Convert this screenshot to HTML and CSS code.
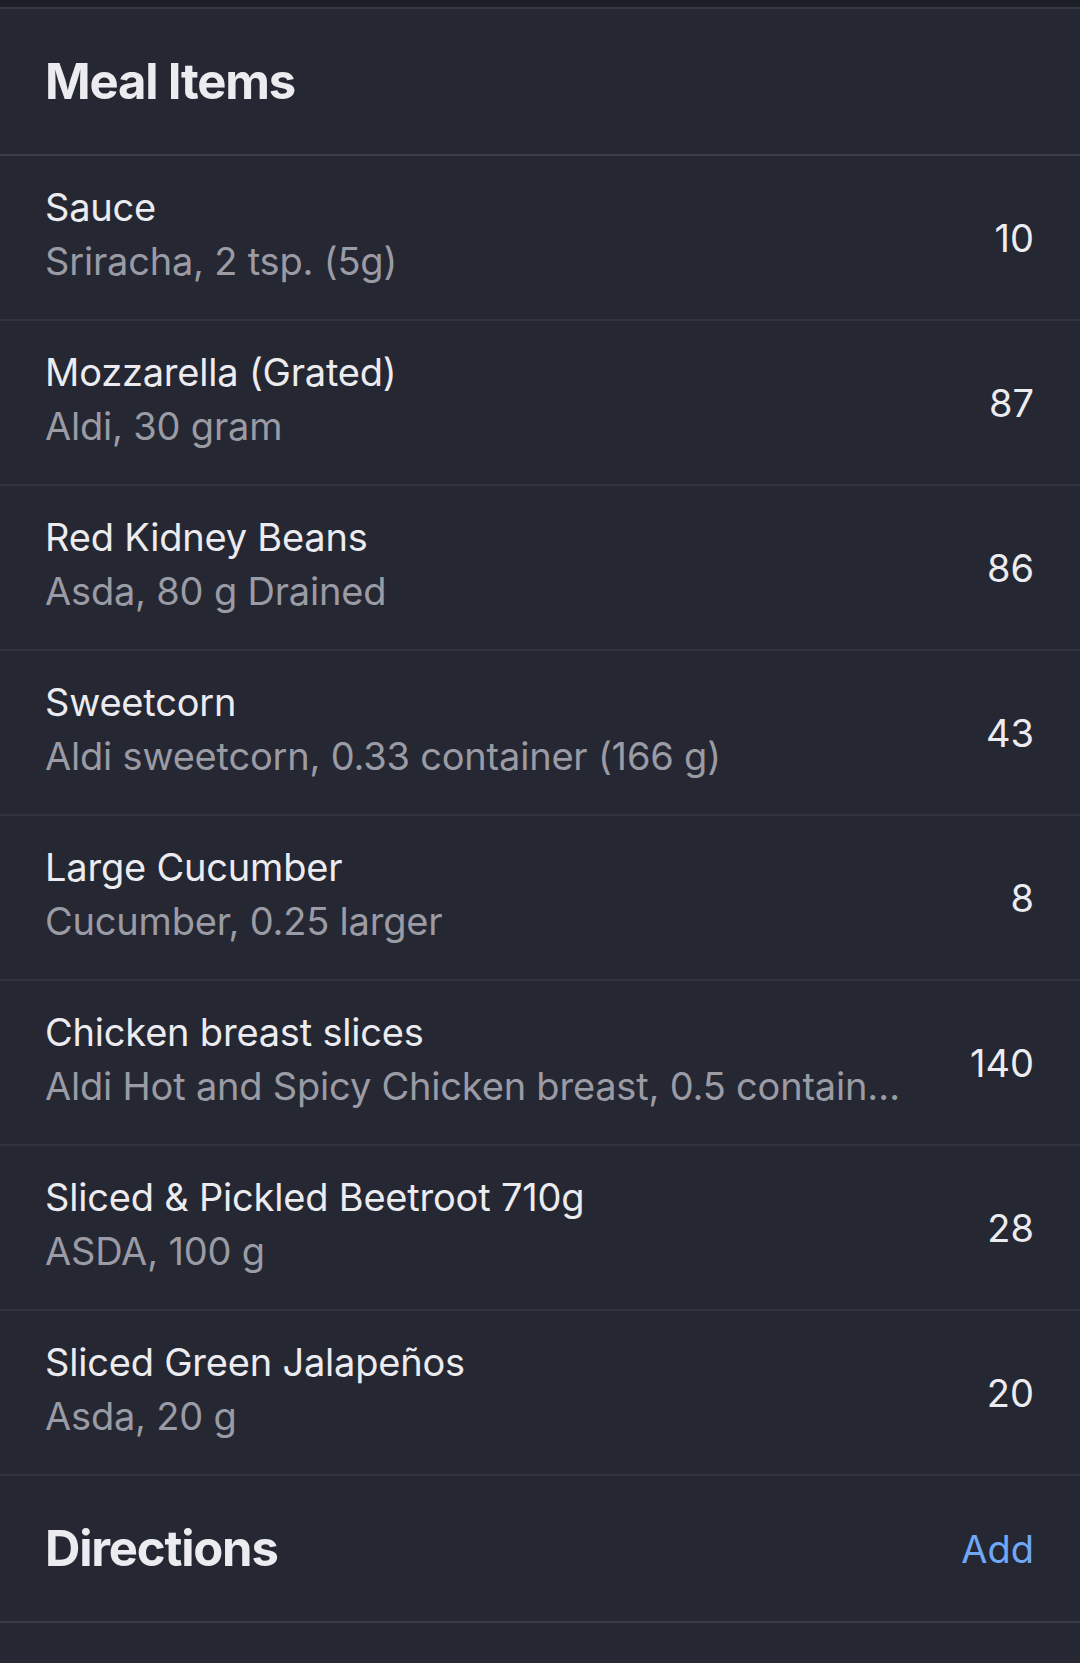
FILE: index.html
```html
<!DOCTYPE html>
<html lang="en">
<head>
    <meta charset="UTF-8">
    <meta name="viewport" content="width=device-width, initial-scale=1.0">
    <title>Meal Items</title>
    <link rel="stylesheet" href="styles.css">
</head>
<body>
    <div class="top-strip"></div>
    <div class="section-header">
        <h1>Meal Items</h1>
    </div>
    <ul class="item-list">
        <li class="item">
            <div class="item-text">
                <div class="item-name">Sauce</div>
                <div class="item-detail">Sriracha, 2 tsp. (5g)</div>
            </div>
            <div class="item-cal">10</div>
        </li>
        <li class="item">
            <div class="item-text">
                <div class="item-name">Mozzarella (Grated)</div>
                <div class="item-detail">Aldi, 30 gram</div>
            </div>
            <div class="item-cal">87</div>
        </li>
        <li class="item">
            <div class="item-text">
                <div class="item-name">Red Kidney Beans</div>
                <div class="item-detail">Asda, 80 g Drained</div>
            </div>
            <div class="item-cal">86</div>
        </li>
        <li class="item">
            <div class="item-text">
                <div class="item-name">Sweetcorn</div>
                <div class="item-detail">Aldi sweetcorn, 0.33 container (166 g)</div>
            </div>
            <div class="item-cal">43</div>
        </li>
        <li class="item">
            <div class="item-text">
                <div class="item-name">Large Cucumber</div>
                <div class="item-detail">Cucumber, 0.25 larger</div>
            </div>
            <div class="item-cal">8</div>
        </li>
        <li class="item">
            <div class="item-text">
                <div class="item-name">Chicken breast slices</div>
                <div class="item-detail">Aldi Hot and Spicy Chicken breast, 0.5 contain…</div>
            </div>
            <div class="item-cal">140</div>
        </li>
        <li class="item">
            <div class="item-text">
                <div class="item-name">Sliced &amp; Pickled Beetroot 710g</div>
                <div class="item-detail">ASDA, 100 g</div>
            </div>
            <div class="item-cal">28</div>
        </li>
        <li class="item">
            <div class="item-text">
                <div class="item-name">Sliced Green Jalapeños</div>
                <div class="item-detail">Asda, 20 g</div>
            </div>
            <div class="item-cal">20</div>
        </li>
    </ul>
    <div class="section-header directions">
        <h1>Directions</h1>
        <a class="add-link" href="#">Add</a>
    </div>
</body>
</html>
```

FILE: styles.css
```css
body {
    margin: 0;
    background-color: #252733;
    color: #ececf0;
    font-family: Inter, "Noto Sans", sans-serif;
    min-height: 1663px;
}
.top-strip {
    height: 7px;
    background-color: #1c1e28;
    border-bottom: 2px solid #363944;
}
.section-header {
    display: flex;
    align-items: center;
    justify-content: space-between;
    height: 145px;
    padding: 0 46px 0 45px;
    border-bottom: 2px solid #3a3d49;
}
.section-header h1 {
    margin: 0;
    font-size: 49px;
    font-weight: 700;
    letter-spacing: -1.2px;
}
.add-link {
    color: #6fa8f5;
    font-size: 38px;
    text-decoration: none;
}
.item-list {
    list-style: none;
    margin: 0;
    padding: 0;
}
.item {
    display: flex;
    align-items: center;
    gap: 40px;
    height: 163px;
    padding: 0 46px 0 45px;
    border-bottom: 2px solid #31333f;
}
.item-text {
    flex: 1;
    min-width: 0;
    padding-bottom: 8px;
}
.item-name, .item-detail {
    font-size: 38px;
    line-height: 54px;
    letter-spacing: -0.2px;
    white-space: nowrap;
    overflow: hidden;
    text-overflow: ellipsis;
}
.item-detail {
    color: #9a9ba4;
}
.item-cal {
    font-size: 38px;
}
```
